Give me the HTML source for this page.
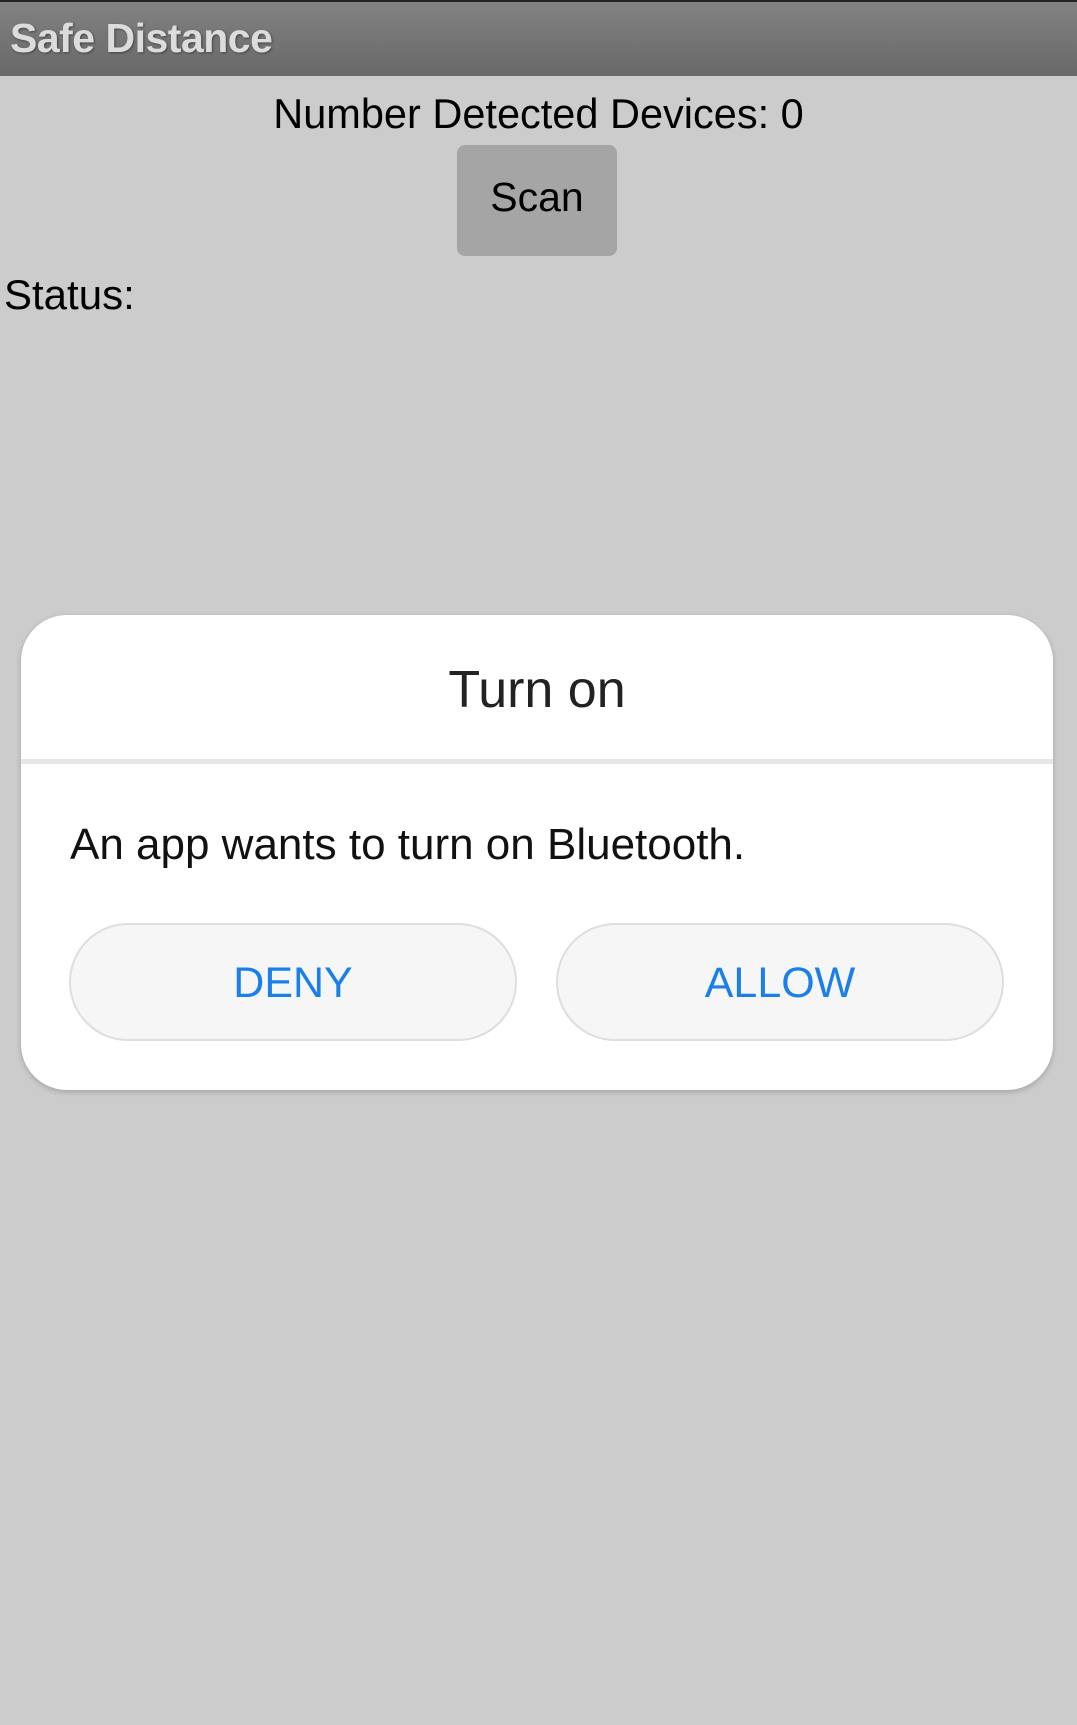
<!DOCTYPE html>
<html><head><style>
html,body{margin:0;padding:0;}
body{width:1077px;height:1725px;background:#cccccc;position:relative;overflow:hidden;font-family:"Liberation Sans",sans-serif;}
.hdr{position:absolute;left:0;top:0;width:1077px;height:76px;background:linear-gradient(#828282,#686868);border-top:2px solid #222;box-sizing:border-box;}
.hdr span{position:absolute;left:10px;top:13px;font-size:41px;font-weight:bold;color:#dcdcdc;text-shadow:1px 1px 2px #444;letter-spacing:-0.5px;}
.num{position:absolute;left:0;width:1077px;top:90px;text-align:center;font-size:41.5px;color:#000;}
.scan{position:absolute;left:457px;top:145px;width:160px;height:111px;background:#a5a5a5;border-radius:8px;text-align:center;line-height:104px;font-size:41px;color:#000;}
.status{position:absolute;left:4px;top:271px;font-size:42px;color:#000;}
.dlg{position:absolute;left:21px;top:615px;width:1032px;height:475px;background:#fff;border-radius:46px;box-shadow:0 2px 6px rgba(0,0,0,0.2);}
.title{position:absolute;left:21px;width:1032px;top:660px;text-align:center;font-size:52px;color:#222;}
.div{position:absolute;left:21px;width:1032px;top:759px;height:5px;background:#e6e6e6;}
.body{position:absolute;left:70px;top:820px;font-size:44px;color:#111;}
.btn{position:absolute;top:923px;width:448px;height:118px;box-sizing:border-box;background:#f6f6f6;border:2px solid #dedede;border-radius:59px;text-align:center;line-height:116px;font-size:43px;color:#1a7fe8;}
</style></head><body>
<div class="hdr"><span>Safe Distance</span></div>
<div class="num">Number Detected Devices: 0</div>
<div class="scan">Scan</div>
<div class="status">Status:</div>
<div class="dlg"></div>
<div class="title">Turn on</div>
<div class="div"></div>
<div class="body">An app wants to turn on Bluetooth.</div>
<div class="btn" style="left:69px">DENY</div>
<div class="btn" style="left:556px">ALLOW</div>
</body></html>
